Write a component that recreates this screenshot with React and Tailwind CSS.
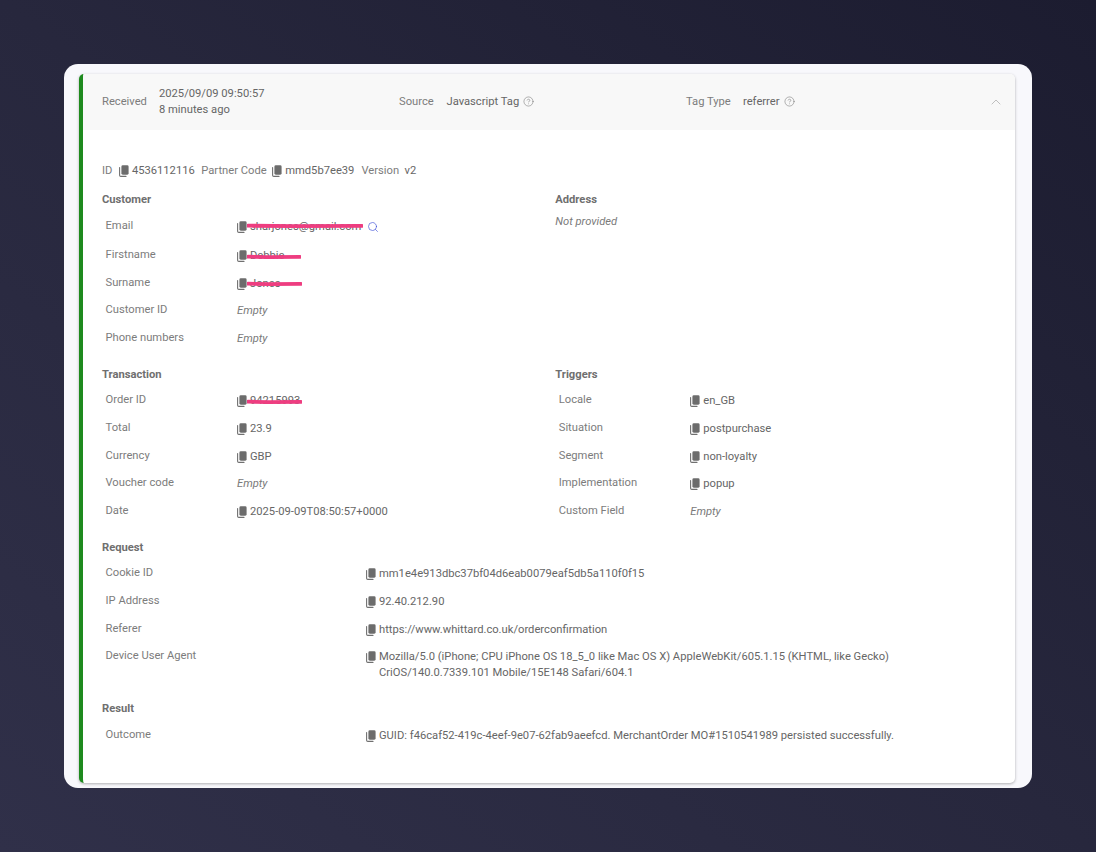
import React from "react";
import { Search, CircleHelp, ChevronUp } from "lucide-react";

function CopyIcon() {
  return (
    <svg width="10" height="12" viewBox="0 0 10 12" className="shrink-0 mr-[3px]">
      <path d="M0.6 2.6V10.2C0.6 10.9 1.1 11.4 1.8 11.4H7" fill="none" stroke="#707070" strokeWidth="1.1" strokeLinecap="round" />
      <rect x="2.4" y="0.3" width="7.2" height="9.4" rx="1.4" fill="#6c6c6c" />
    </svg>
  );
}

function Strike({ w, top = 0 }) {
  return (
    <svg width={w} height="6" viewBox={`0 0 ${w} 6`} className="absolute left-[10px]" style={{ top }}>
      <path d={`M1 2.7 L${w * 0.4} 3.1 L${w - 1} 2.9`} fill="none" stroke="#ee3d80" strokeWidth="3.8" strokeLinecap="round" />
    </svg>
  );
}

function Value({ text, strike, strikeTop = 4.5, children }) {
  return (
    <span className="relative flex items-center text-[#666666]">
      <CopyIcon />
      <span>{text}</span>
      {strike ? <Strike w={strike} top={strikeTop} /> : null}
      {children}
    </span>
  );
}

function Empty() {
  return <span className="italic text-[#7a7a7a]">Empty</span>;
}

function Row({ label, labelWidth = "w-[131.5px]", height = "h-[27.75px]", children }) {
  return (
    <div className={`flex items-center pl-[3.5px] ${height}`}>
      <span className={`${labelWidth} shrink-0 text-[#7c7c7c] -translate-y-[1px]`}>{label}</span>
      <div className="flex-1 min-w-0">{children}</div>
    </div>
  );
}

function Heading({ children }) {
  return <div className="h-[14px] leading-[14px] font-bold text-[#6f6f6f]">{children}</div>;
}

function Help() {
  return <CircleHelp size={11} strokeWidth={1} className="text-[#5f5f5f] ml-[4px] -translate-y-[1px]" />;
}

export default function App() {
  return (
    <div className="w-[1096px] h-[852px] overflow-hidden bg-gradient-to-tr from-[#303049] via-[#27273d] to-[#1c1c30] pt-[64px] pl-[64px] [font-family:Roboto,sans-serif] text-[11.2px] leading-[14px]">
      <div className="w-[968px] h-[724px] rounded-[14px] bg-[#f8f8fc] pt-[10px] pl-[15px]">
        <div className="w-[936px] h-[709px] rounded-[5px] bg-white border-l-[4px] border-[#1e8a1e] shadow-[0_1px_3px_rgba(0,0,0,0.3)] overflow-hidden">
          <div className="h-[56px] bg-[#f8f8f8] flex items-center pl-[19px] pr-[11px]">
            <div className="w-[297px] flex items-center">
              <span className="w-[57px] text-[#7c7c7c]">Received</span>
              <div className="leading-[16px] text-[#666666]">
                <div>2025/09/09 09:50:57</div>
                <div>8 minutes ago</div>
              </div>
            </div>
            <div className="w-[287px] flex items-center">
              <span className="w-[47.5px] text-[#7c7c7c]">Source</span>
              <span className="text-[#666666]">Javascript Tag</span>
              <Help />
            </div>
            <div className="flex-1 flex items-center">
              <span className="w-[57px] text-[#7c7c7c]">Tag Type</span>
              <span className="text-[#666666]">referrer</span>
              <Help />
            </div>
            <ChevronUp size={16} strokeWidth={1.1} className="text-[#aaaaaa]" />
          </div>

          <div className="pt-[34px] px-[19px]">
            <div className="flex items-center h-[14px] text-[#7c7c7c]">
              <span className="mr-[6.5px]">ID</span>
              <CopyIcon />
              <span className="text-[#666666] mr-[6.5px]">4536112116</span>
              <span className="mr-[5.5px]">Partner Code</span>
              <CopyIcon />
              <span className="text-[#666666] mr-[7px]">mmd5b7ee39</span>
              <span className="mr-[5.5px]">Version</span>
              <span className="text-[#666666]">v2</span>
            </div>

            <div className="grid grid-cols-[453.25px_1fr] mt-[15px]">
              <div>
                <Heading>Customer</Heading>
                <div className="mt-[5px]">
                  <Row label="Email" height="h-[30px]">
                    <Value text="sharjones@gmail.com" strike={116} strikeTop={3}>
                      <Search size={12} strokeWidth={1.3} className="text-[#3f51d8] ml-[6px]" />
                    </Value>
                  </Row>
                  <Row label="Firstname" height="h-[28px]"><Value text="Debbie" strike={54} /></Row>
                  <Row label="Surname" height="h-[27px]"><Value text="Jones" strike={55} /></Row>
                  <Row label="Customer ID" height="h-[28.5px]"><Empty /></Row>
                  <Row label="Phone numbers" height="h-[27.5px]"><Empty /></Row>
                </div>
              </div>
              <div>
                <Heading>Address</Heading>
                <div className="mt-[8px] italic text-[#7a7a7a]">Not provided</div>
              </div>
            </div>

            <div className="grid grid-cols-[453.25px_1fr] mt-[15px]">
              <div>
                <Heading>Transaction</Heading>
                <div className="mt-[5px]">
                  <Row label="Order ID" height="h-[28px]"><Value text="94215993" strike={55} strikeTop={5} /></Row>
                  <Row label="Total" height="h-[28px]"><Value text="23.9" /></Row>
                  <Row label="Currency" height="h-[27.5px]"><Value text="GBP" /></Row>
                  <Row label="Voucher code" height="h-[27.5px]"><Empty /></Row>
                  <Row label="Date"><Value text="2025-09-09T08:50:57+0000" /></Row>
                </div>
              </div>
              <div>
                <Heading>Triggers</Heading>
                <div className="mt-[5px]">
                  <Row label="Locale" height="h-[28px]"><Value text="en_GB" /></Row>
                  <Row label="Situation" height="h-[28px]"><Value text="postpurchase" /></Row>
                  <Row label="Segment" height="h-[27.5px]"><Value text="non-loyalty" /></Row>
                  <Row label="Implementation" height="h-[27.5px]"><Value text="popup" /></Row>
                  <Row label="Custom Field"><Empty /></Row>
                </div>
              </div>
            </div>

            <div className="mt-[15.5px]">
              <Heading>Request</Heading>
              <div className="mt-[5px]">
                <Row label="Cookie ID" labelWidth="w-[260.5px]" height="h-[28px]"><Value text="mm1e4e913dbc37bf04d6eab0079eaf5db5a110f0f15" /></Row>
                <Row label="IP Address" labelWidth="w-[260.5px]" height="h-[28px]"><Value text="92.40.212.90" /></Row>
                <Row label="Referer" labelWidth="w-[260.5px]" height="h-[28px]"><Value text="https://www.whittard.co.uk/orderconfirmation" /></Row>
                <div className="flex items-start pl-[3.5px] pt-[5px] h-[42.75px]">
                  <span className="w-[260.5px] shrink-0 text-[#7c7c7c]">Device User Agent</span>
                  <div className="flex items-start text-[#666666] leading-[16px]">
                    <span className="pt-[2px] shrink-0"><CopyIcon /></span>
                    <span className="w-[600px]">Mozilla/5.0 (iPhone; CPU iPhone OS 18_5_0 like Mac OS X) AppleWebKit/605.1.15 (KHTML, like Gecko) CriOS/140.0.7339.101 Mobile/15E148 Safari/604.1</span>
                  </div>
                </div>
              </div>
            </div>

            <div className="mt-[15px]">
              <Heading>Result</Heading>
              <div className="mt-[6px]">
                <Row label="Outcome" labelWidth="w-[260.5px]"><Value text="GUID: f46caf52-419c-4eef-9e07-62fab9aeefcd. MerchantOrder MO#1510541989 persisted successfully." /></Row>
              </div>
            </div>
          </div>
        </div>
      </div>
    </div>
  );
}
